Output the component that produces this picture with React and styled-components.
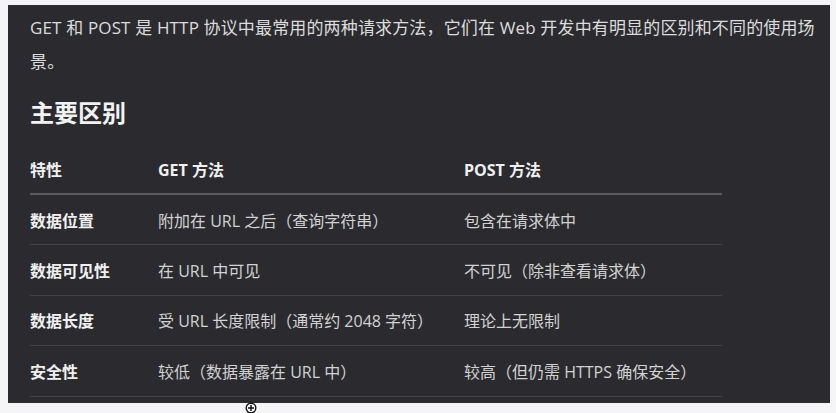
import React from 'react'
import styled, { createGlobalStyle } from 'styled-components'

const GlobalStyle = createGlobalStyle`
  html, body {
    background: #f5f5f7;
  }
  body {
    margin: 5px 6px 0 8px;
    font-family: "Open Sans", "Noto Sans CJK SC", sans-serif;
  }
`

const Page = styled.div`
  position: relative;
  height: 408px;
`

const Panel = styled.div`
  box-sizing: border-box;
  width: 822px;
  height: 398px;
  padding: 6px 10px 0 22px;
  background-color: #2b2b2f;
  color: #dcdcdc;
`

const Intro = styled.p`
  margin: 0;
  font-size: 17px;
  line-height: 34px;
  letter-spacing: 0.15px;
`

const Heading = styled.h2`
  margin: 16px 0 13px;
  font-size: 24px;
  line-height: 36px;
  font-weight: 700;
  color: #f2f2f2;
`

const Table = styled.table`
  width: 692px;
  border-collapse: collapse;
  font-size: 16px;
`

const Cell = styled.td`
  height: 50.5px;
  box-sizing: border-box;
  padding: 0;
  vertical-align: middle;
  border-bottom: 1px solid #414146;
  width: ${p => p.$w}px;
  font-weight: ${p => (p.$bold ? 700 : 400)};
  color: ${p => (p.$bold ? '#f0f0f0' : '#d2d2d2')};
`

const HeadCell = styled.th`
  height: 50px;
  box-sizing: border-box;
  padding: 0;
  text-align: left;
  font-weight: 700;
  color: #f0f0f0;
  border-bottom: 2px solid #5a5a5f;
  width: ${p => p.$w}px;
`

const Cursor = styled.svg`
  position: absolute;
  left: 237px;
  top: 397px;
  z-index: 2;
  display: block;
`

const widths = [128, 306, 258]

const rows = [
  ['数据位置', '附加在 URL 之后（查询字符串）', '包含在请求体中'],
  ['数据可见性', '在 URL 中可见', '不可见（除非查看请求体）'],
  ['数据长度', '受 URL 长度限制（通常约 2048 字符）', '理论上无限制'],
  ['安全性', '较低（数据暴露在 URL 中）', '较高（但仍需 HTTPS 确保安全）'],
]

const App = () => (
  <Page>
    <GlobalStyle />
    <Panel>
      <Intro>
        GET 和 POST 是 HTTP 协议中最常用的两种请求方法，它们在 Web 开发中有明显的区别和不同的使用场景。
      </Intro>
      <Heading>主要区别</Heading>
      <Table>
        <thead>
          <tr>
            <HeadCell $w={widths[0]}>特性</HeadCell>
            <HeadCell $w={widths[1]}>GET 方法</HeadCell>
            <HeadCell $w={widths[2]}>POST 方法</HeadCell>
          </tr>
        </thead>
        <tbody>
          {rows.map(r => (
            <tr key={r[0]}>
              <Cell $w={widths[0]} $bold>{r[0]}</Cell>
              <Cell $w={widths[1]}>{r[1]}</Cell>
              <Cell $w={widths[2]}>{r[2]}</Cell>
            </tr>
          ))}
        </tbody>
      </Table>
    </Panel>
    <Cursor width="12" height="12" viewBox="0 0 12 12">
      <circle cx="6" cy="6" r="4.8" fill="#fff" stroke="#111" strokeWidth="1.4" />
      <path d="M6 3v6M3 6h6" stroke="#111" strokeWidth="1.5" />
    </Cursor>
  </Page>
)

export default App
